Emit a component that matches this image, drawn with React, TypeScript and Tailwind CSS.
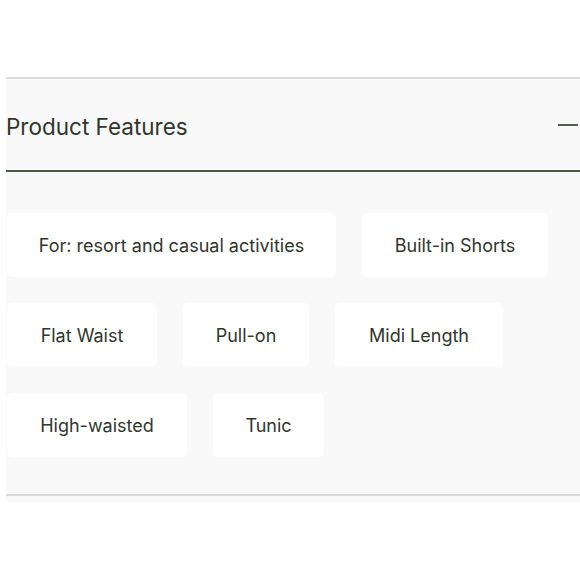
import React from "react";

const chips: { label: string; w: string }[][] = [
  [
    { label: "For: resort and casual activities", w: "w-[329px]" },
    { label: "Built-in Shorts", w: "w-[186px]" },
  ],
  [
    { label: "Flat Waist", w: "w-[150px]" },
    { label: "Pull-on", w: "w-[126px]" },
    { label: "Midi Length", w: "w-[168px]" },
  ],
  [
    { label: "High-waisted", w: "w-[180px]" },
    { label: "Tunic", w: "w-[111px]" },
  ],
];

export default function App() {
  return (
    <div className="w-[580px] h-[580px] bg-white overflow-hidden" style={{ fontFamily: "Inter, 'Noto Sans', sans-serif" }}>
      <div className="ml-[6px] mt-[77px] bg-[#f9f9f9] border-t-2 border-[#dcdcdc]">
        <div className="h-[93px] flex items-center justify-between border-b-2 border-[#4f5748]">
          <span className="text-[22.5px] text-[#2f362b] mt-[5px]">Product Features</span>
          <span className="w-[20px] h-[2px] bg-[#555a52] mr-[2px] mt-[1px]" />
        </div>
        <div className="pt-[41px] pb-[37px] pl-[1px] flex flex-col gap-[26px] border-b-2 border-[#d8d8d8]">
          {chips.map((row, i) => (
            <div key={i} className="flex gap-[26px]">
              {row.map((c) => (
                <div
                  key={c.label}
                  className={`${c.w} h-[64px] bg-white rounded-[5px] flex items-center justify-center text-[18px] text-[#30362c]`}
                >
                  {c.label}
                </div>
              ))}
            </div>
          ))}
        </div>
        <div className="h-[6px]" />
      </div>
    </div>
  );
}
